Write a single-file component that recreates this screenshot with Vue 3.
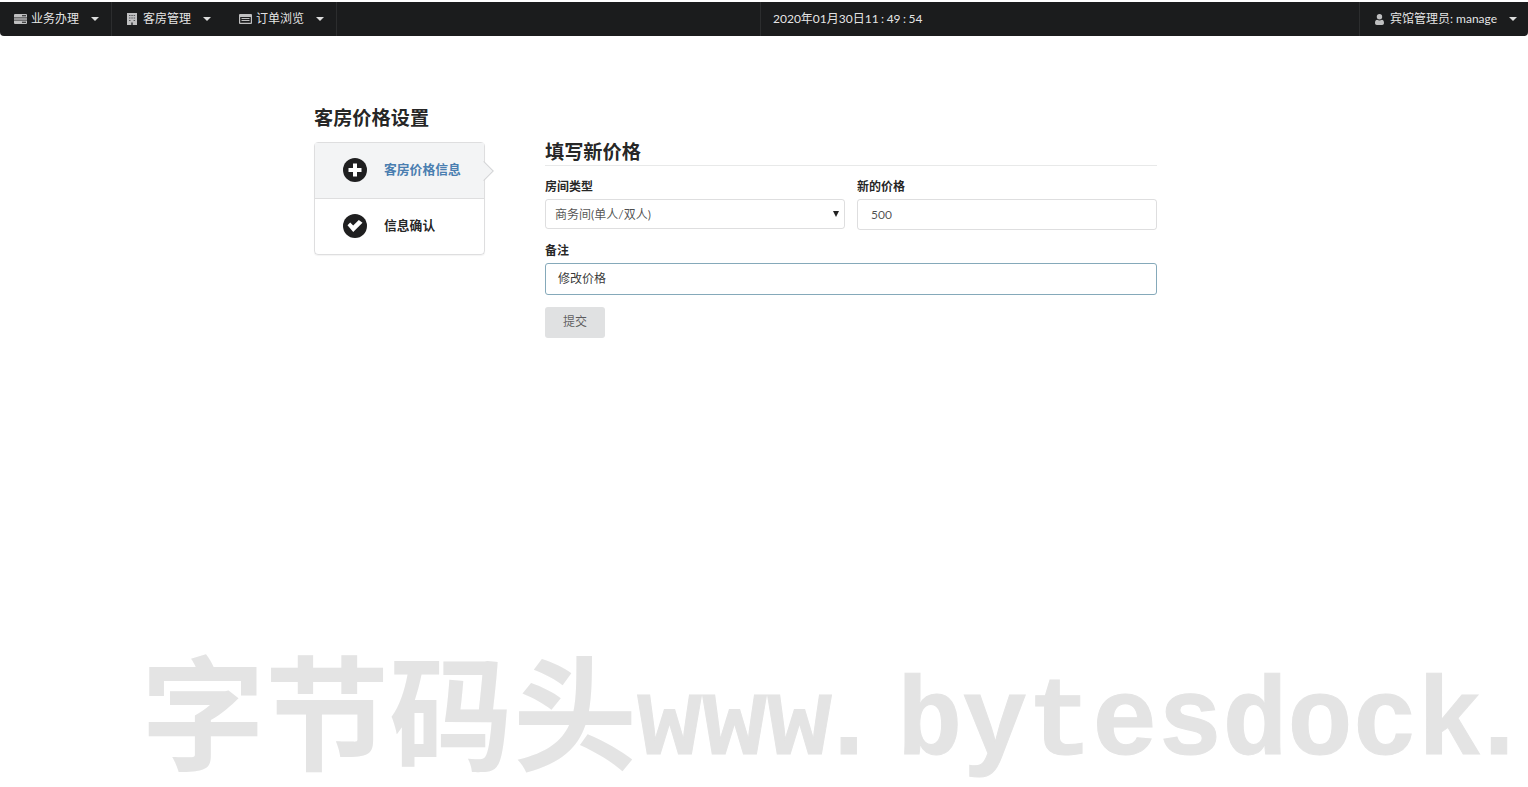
<script setup>
const navItems = [
  { label: '业务办理', icon: 'server', cls: 'w1' },
  { label: '客房管理', icon: 'building', cls: 'w2' },
  { label: '订单浏览', icon: 'list', cls: 'w3' }
]
</script>

<template>
  <div class="page">
    <nav class="navbar">
      <div class="nav-left">
        <div v-for="item in navItems" :key="item.label" class="nav-item" :class="item.cls">
          <svg v-if="item.icon === 'server'" class="ico wide" viewBox="0 0 13 10"><path fill="currentColor" d="M1 0h11a1 1 0 0 1 1 1v2.500H0V1a1 1 0 0 1 1-1zM0 4.200h13v1.600H0zM0 6.500h13V9a1 1 0 0 1-1 1H1a1 1 0 0 1-1-1z"/><path fill="#1b1c1d" d="M8 1.300h4v1H8zM8 7.700h4v1H8z"/></svg>
          <svg v-else-if="item.icon === 'building'" class="ico tall" viewBox="0 0 10 12"><path fill="currentColor" d="M0 0h10v12H0z"/><path fill="#55575a" d="M2 2h1.500v1H2zM4.300 2h1.500v1H4.300zM6.600 2h1.500v1H6.600zM2 4.500h1.500v1H2zM4.300 4.500h1.500v1H4.300zM6.600 4.500h1.500v1H6.600zM2 7h1.500v1H2zM6.600 7h1.500v1H6.600zM4 9.500h2V12H4z"/></svg>
          <svg v-else class="ico wide" viewBox="0 0 13 10"><path fill="currentColor" fill-rule="evenodd" d="M1 0h11a1 1 0 0 1 1 1v8a1 1 0 0 1-1 1H1a1 1 0 0 1-1-1V1a1 1 0 0 1 1-1zm.200 3v5.800h10.600V3z"/><path fill="currentColor" d="M2.500 4h8v1h-8zM2.500 6h8v1h-8z"/></svg>
          <span class="nav-text">{{ item.label }}</span>
          <i class="caret"></i>
        </div>
      </div>
      <div class="nav-clock"><span class="nav-text">2020年01月30日11<span class="colon">:</span>49<span class="colon">:</span>54</span></div>
      <div class="nav-user">
        <svg class="ico user" viewBox="0 0 9 11"><circle cx="4.500" cy="2.800" r="2.700" fill="currentColor"/><path fill="currentColor" d="M0 9c0-2.200 1-3.300 2.200-3.300.7.500 1.400.7 2.300.7s1.600-.2 2.300-.7C8 5.700 9 6.800 9 9c0 1.300-.8 2-1.800 2H1.800C.8 11 0 10.300 0 9z"/></svg>
        <span class="nav-text">宾馆管理员: manage</span>
        <i class="caret"></i>
      </div>
    </nav>

    <main class="content">
      <h2 class="page-title">客房价格设置</h2>
      <div class="columns">
        <div class="steps">
          <div class="step active">
            <svg class="step-ico" viewBox="0 0 24 24"><circle cx="12" cy="12" r="12" fill="#1f1f20"/><path fill="#fff" d="M10 5.500h4V10h4.500v4H14v4.500h-4V14H5.500v-4H10z"/></svg>
            <span>客房价格信息</span>
          </div>
          <div class="step">
            <svg class="step-ico" viewBox="0 0 24 24"><circle cx="12" cy="12" r="12" fill="#1f1f20"/><path fill="#fff" d="M5 12.600l2.700-2.700 3 3 5.600-5.600L20 10l-9.300 9.300z" transform="translate(-0.500 -1.300)"/></svg>
            <span>信息确认</span>
          </div>
        </div>

        <form class="form">
          <h3 class="form-title">填写新价格</h3>
          <div class="field-row">
            <div class="field">
              <label>房间类型</label>
              <div class="select">
                <span>商务间(单人/双人)</span>
                <i class="select-arrow"></i>
              </div>
            </div>
            <div class="field">
              <label>新的价格</label>
              <div class="input price">500</div>
            </div>
          </div>
          <div class="field note">
            <label>备注</label>
            <div class="input focus">修改价格</div>
          </div>
          <div class="button">提交</div>
        </form>
      </div>
    </main>

    <div class="watermark"><span class="wm-cjk">字节码头</span><span class="wm-latin">www<span class="dot">.</span>bytesdock<span class="dot">.</span></span></div>
  </div>
</template>

<style scoped>
.page {
  position: relative;
  height: 787px;
  overflow: hidden;
  background: #fff;
  font-family: Lato, "Noto Sans CJK SC", sans-serif;
  font-size: 12px;
  color: rgba(0, 0, 0, 0.87);
}
.navbar {
  display: grid;
  grid-template-columns: 760px 1fr auto;
  height: 34px;
  position: relative;
  top: 2px;
  background: #1b1c1d;
  color: rgba(255, 255, 255, 0.9);
  border-radius: 0 0 4px 4px;
}
.nav-left {
  display: flex;
}
.nav-item {
  display: flex;
  align-items: center;
  box-sizing: border-box;
}
.w1 { width: 112px; padding-left: 14px; border-right: 1px solid rgba(255, 255, 255, 0.08); }
.w2 { width: 112px; padding-left: 15px; }
.w3 { width: 113px; padding-left: 15px; border-right: 1px solid rgba(255, 255, 255, 0.08); }
.ico { display: block; flex: none; color: rgba(255, 255, 255, 0.72); }
.ico.wide { width: 13px; height: 10px; margin-right: 4px; }
.ico.tall { width: 10px; height: 12px; margin-right: 6px; }
.ico.user { width: 9px; height: 11px; margin-right: 6px; }
.nav-text { line-height: 34px; white-space: nowrap; }
.caret {
  width: 0;
  height: 0;
  margin-left: 12px;
  border-left: 4.500px solid transparent;
  border-right: 4.500px solid transparent;
  border-top: 4.500px solid rgba(255, 255, 255, 0.85);
}
.nav-clock {
  display: flex;
  align-items: center;
  padding-left: 12px;
  border-left: 1px solid rgba(255, 255, 255, 0.08);
  white-space: nowrap;
}
.colon { margin: 0 2.500px; }
.nav-user {
  display: flex;
  align-items: center;
  width: 169px;
  box-sizing: border-box;
  padding-left: 15px;
  border-left: 1px solid rgba(255, 255, 255, 0.08);
}
.content {
  width: 843px;
  margin-left: 314px;
  padding-top: 72px;
}
.page-title {
  margin: 0;
  font-size: 19.200px;
  line-height: 24px;
  font-weight: 700;
}
.columns {
  display: flex;
  margin-top: 12px;
  gap: 60px;
}
.steps {
  width: 171px;
  height: 113px;
  box-sizing: border-box;
  border: 1px solid rgba(34, 36, 38, 0.15);
  border-radius: 4px;
  box-shadow: 0 1px 1px 0 rgba(34, 36, 38, 0.05);
  flex: none;
}
.step {
  position: relative;
  display: flex;
  align-items: center;
  height: 55px;
  box-sizing: border-box;
  padding-left: 28px;
  font-size: 12.800px;
  font-weight: 700;
  color: rgba(0, 0, 0, 0.87);
}
.step span {
  padding-bottom: 4px;
}
.step + .step {
  height: 56px;
  border-top: 1px solid rgba(34, 36, 38, 0.15);
}
.step.active {
  background: #f3f4f5;
  color: #4a7eb0;
}
.step.active::after {
  content: "";
  position: absolute;
  top: 50%;
  right: 0;
  width: 14px;
  height: 14px;
  background: #f3f4f5;
  border: solid rgba(34, 36, 38, 0.15);
  border-width: 1px 1px 0 0;
  box-sizing: border-box;
  transform: translate(50%, -50%) rotate(45deg);
}
.step-ico {
  width: 24px;
  height: 24px;
  margin-right: 17px;
  margin-bottom: 2px;
  flex: none;
}
.form {
  width: 612px;
  flex: none;
}
.form-title {
  margin: -2px 0 0;
  height: 25px;
  font-size: 19.200px;
  line-height: 24px;
  font-weight: 700;
  box-sizing: content-box;
  border-bottom: 1px solid rgba(34, 36, 38, 0.1);
}
.field-row {
  display: flex;
  gap: 12px;
  margin-top: 14px;
}
.field {
  flex: 1 1 0;
}
.field label {
  display: block;
  height: 14px;
  line-height: 14px;
  font-size: 12px;
  font-weight: 700;
  margin-bottom: 5px;
}
.select,
.input {
  display: flex;
  align-items: center;
  height: 30px;
  box-sizing: border-box;
  border: 1px solid rgba(34, 36, 38, 0.15);
  border-radius: 3px;
  color: rgba(0, 0, 0, 0.7);
  font-size: 12px;
}
.select {
  position: relative;
  padding-left: 9px;
  padding-bottom: 2px;
}
.select-arrow {
  position: absolute;
  right: 5px;
  top: 11px;
  border-left: 3.500px solid transparent;
  border-right: 3.500px solid transparent;
  border-top: 6px solid #222;
}
.input.price {
  padding-left: 13px;
  height: 31px;
}
.note {
  margin-top: 14px;
}
.input.focus {
  height: 32px;
  padding-left: 12px;
  padding-bottom: 3px;
  border-color: #85a9ba;
  color: rgba(0, 0, 0, 0.8);
}
.button {
  display: flex;
  align-items: center;
  justify-content: center;
  width: 60px;
  height: 31px;
  margin-top: 12px;
  padding-bottom: 4px;
  box-sizing: border-box;
  background: #e0e1e2;
  border-radius: 3px;
  color: rgba(0, 0, 0, 0.6);
  font-size: 12px;
}
.watermark {
  position: absolute;
  left: 141px;
  top: 632px;
  display: flex;
  align-items: baseline;
  white-space: nowrap;
  color: #e4e4e4;
  font-weight: 700;
  line-height: 150px;
  pointer-events: none;
}
.wm-cjk {
  font-family: "Noto Sans CJK SC", sans-serif;
  font-size: 124px;
}
.wm-latin {
  font-family: "Liberation Mono", monospace;
  font-size: 108.400px;
  display: inline-block;
  transform: translateY(-6px) scaleY(1.03);
  transform-origin: 0 100%;
  -webkit-text-stroke: 1px #e4e4e4;
}
.dot {
  display: inline-block;
  transform: translateX(-16px);
}
</style>
